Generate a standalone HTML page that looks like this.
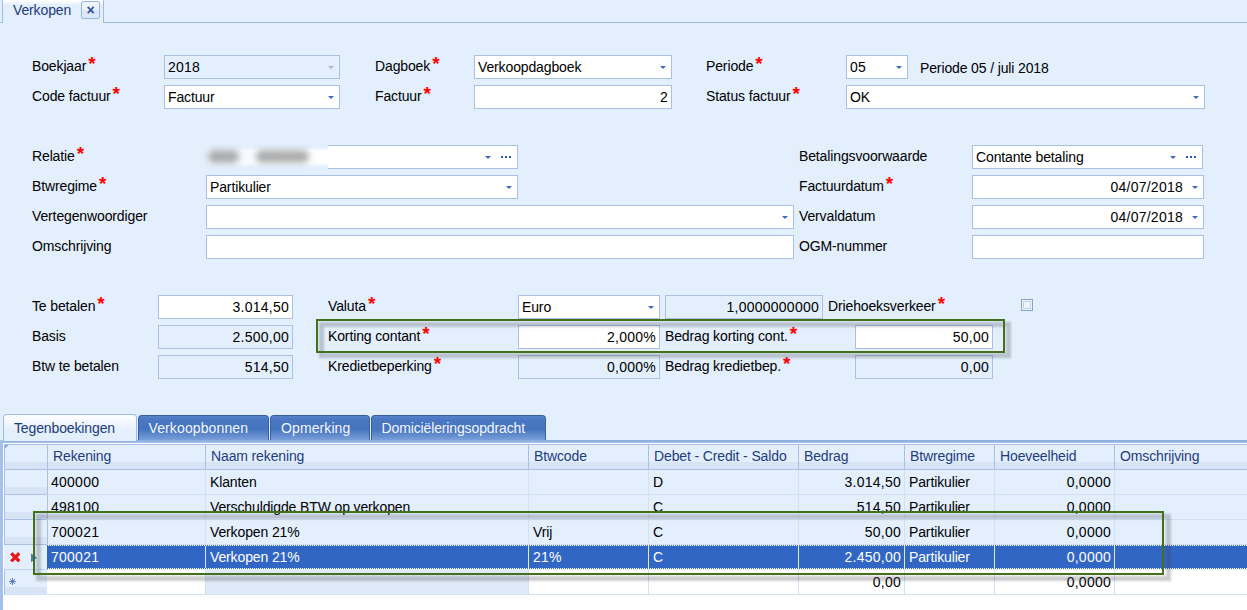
<!DOCTYPE html>
<html lang="nl"><head><meta charset="utf-8"><title>Verkopen</title>
<style>
*{box-sizing:border-box;margin:0;padding:0}
html,body{width:1247px;height:610px;overflow:hidden;background:#e3effd}
body{position:relative;font-family:"Liberation Sans",sans-serif;font-size:14px;color:#000000;letter-spacing:-0.13px}
.l{position:absolute;height:24px;line-height:24px;white-space:nowrap}
.l i{font-style:normal;color:#f00;font-size:19px;line-height:0;font-weight:bold;position:relative;top:-1.2px;margin-left:2px;letter-spacing:0}
.f{position:absolute;height:24px;line-height:22px;border:1px solid #a9c0e4;background:#fff;padding:0 3px;white-space:nowrap;overflow:hidden}
.f.d{background:#e3effd}
.f.r{text-align:right;padding-right:3px}
.a{position:absolute;width:0;height:0;border-left:3px solid transparent;border-right:3px solid transparent;border-top:3.5px solid #3d6cb8}
.a.g{border-top-color:#a9b7cc}
.e{position:absolute;width:10px;height:2px;background:linear-gradient(90deg,#2d5aa8 0 2px,transparent 2px 4px,#2d5aa8 4px 6px,transparent 6px 8px,#2d5aa8 8px 10px)}


.tab{position:absolute;top:415px;height:26px;line-height:25px;white-space:nowrap;border-radius:4px 4px 0 0;color:#f3f7fd;padding-left:10px;
 border:1px solid #3560a8;border-bottom:none;
 background:linear-gradient(180deg,#5682c9 0,#4a78c2 15%,#4573be 52%,#5a85ca 70%,#7fa3db 100%)}
.tab.act{top:414px;height:27px;line-height:27px;z-index:2;color:#1c3c7a;border:1px solid #9dbce6;border-bottom:none;background:linear-gradient(180deg,#ffffff 0,#f4f8fe 25%,#e3effd 60%)}
.hc{position:absolute;top:445px;height:24px;line-height:22px;color:#1e3c7c;white-space:nowrap;padding-left:5px;border-left:1px solid #a9c0e4;
 background:linear-gradient(180deg,#e3effd 0,#e3effd 70%,#d6e4f6 70%,#d6e4f6 100%)}
.c{position:absolute;height:25px;line-height:24px;white-space:nowrap;padding:0 3px 0 4px;border-left:1px solid #d2e0f3;border-bottom:1px solid #d2e0f3;overflow:hidden}
.c.r{text-align:right}
.ind{position:absolute;left:5px;width:42px;height:25px;border-bottom:1px solid #a9c0e4;background:linear-gradient(180deg,#e3effd 0,#e3effd 70%,#d6e4f6 70%,#d6e4f6 100%)}
.gb{position:absolute;border:2px solid #44701c}
.gs{position:absolute;border:5.5px solid rgba(70,72,80,.27);filter:blur(1.3px)}
.n{letter-spacing:.25px}

</style></head><body>
<div style="position:absolute;left:0;top:22px;width:1247px;height:1px;background:#9dbce6"></div>
<div style="position:absolute;left:2px;top:-2px;width:102px;height:25px;border:1px solid #9dbce6;border-bottom:none;background:linear-gradient(180deg,#fff 0,#fff 2px,#e3effd 6px)"></div>
<div style="position:absolute;left:13px;top:0;height:22px;line-height:20px;color:#1c3c7a;white-space:nowrap">Verkopen</div>
<div style="position:absolute;left:81px;top:1px;width:19px;height:18px;border:1px solid #9ab4dc;border-radius:2px;background:linear-gradient(180deg,#eff5fd 0,#e9f1fb 50%,#dbe7f6 50%,#dde8f7 100%);color:#2b4f94;font-size:14px;font-weight:bold;line-height:16px;text-align:center;letter-spacing:0">×</div>
<div class="l" style="left:32px;top:54px">Boekjaar<i>*</i></div>
<div class="f d n" style="left:164px;top:55px;width:176px;">2018</div>
<div class="a g" style="left:327.5px;top:65.5px"></div>
<div class="l" style="left:32px;top:84px">Code factuur<i>*</i></div>
<div class="f " style="left:164px;top:85px;width:176px;">Factuur</div>
<div class="a" style="left:327.5px;top:95.5px"></div>
<div class="l" style="left:375px;top:54px">Dagboek<i>*</i></div>
<div class="f " style="left:474px;top:55px;width:198px;">Verkoopdagboek</div>
<div class="a" style="left:659.5px;top:65.5px"></div>
<div class="l" style="left:375px;top:84px">Factuur<i>*</i></div>
<div class="f r n" style="left:474px;top:85px;width:198px;">2</div>
<div class="l" style="left:706px;top:54px">Periode<i>*</i></div>
<div class="f  n" style="left:846px;top:55px;width:62px;">05</div>
<div class="a" style="left:895.5px;top:65.5px"></div>
<div class="l" style="left:920px;top:56px">Periode 05 / juli 2018</div>
<div class="l" style="left:706px;top:84px">Status factuur<i>*</i></div>
<div class="f " style="left:846px;top:85px;width:359px;">OK</div>
<div class="a" style="left:1192.5px;top:95.5px"></div>
<div class="l" style="left:32px;top:144px">Relatie<i>*</i></div>
<div class="f " style="left:206px;top:145px;width:312px;"></div>
<div class="a" style="left:484.5px;top:155.5px"></div>
<div class="e" style="left:501px;top:156px"></div>
<div class="l" style="left:32px;top:174px">Btwregime<i>*</i></div>
<div class="f " style="left:206px;top:175px;width:312px;">Partikulier</div>
<div class="a" style="left:505.5px;top:185.5px"></div>
<div class="l" style="left:32px;top:204px">Vertegenwoordiger</div>
<div class="f " style="left:206px;top:205px;width:588px;"></div>
<div class="a" style="left:781.5px;top:215.5px"></div>
<div class="l" style="left:32px;top:234px">Omschrijving</div>
<div class="f " style="left:206px;top:235px;width:588px;"></div>
<div class="l" style="left:799px;top:144px">Betalingsvoorwaarde</div>
<div class="f " style="left:972px;top:145px;width:231px;">Contante betaling</div>
<div class="a" style="left:1169.5px;top:155.5px"></div>
<div class="e" style="left:1186px;top:156px"></div>
<div class="l" style="left:799px;top:174px">Factuurdatum<i>*</i></div>
<div class="f r n" style="left:972px;top:175px;width:232px;padding-right:20px">04/07/2018</div>
<div class="a" style="left:1191.5px;top:185.5px"></div>
<div class="l" style="left:799px;top:204px">Vervaldatum</div>
<div class="f r n" style="left:972px;top:205px;width:232px;padding-right:20px">04/07/2018</div>
<div class="a" style="left:1191.5px;top:215.5px"></div>
<div class="l" style="left:799px;top:234px">OGM-nummer</div>
<div class="f " style="left:972px;top:235px;width:232px;"></div>
<div style="position:absolute;left:201px;top:144px;width:127px;height:26px;background:#e3effd"></div>
<div style="position:absolute;left:207px;top:149px;width:123px;height:16px;background:linear-gradient(90deg,#f0f5fd 0,#f8fbff 40%,#ffffff 100%);filter:blur(1.6px)"></div>
<div style="position:absolute;left:328px;top:146px;width:5px;height:22px;background:#fff"></div>
<div style="position:absolute;left:208px;top:150px;width:31px;height:13px;border-radius:6px;background:#909090;filter:blur(3px);opacity:.72"></div>
<div style="position:absolute;left:256px;top:150px;width:53px;height:13px;border-radius:6px;background:#909090;filter:blur(3px);opacity:.72"></div>
<div class="l" style="left:32px;top:294px">Te betalen<i>*</i></div>
<div class="f r n" style="left:158px;top:295px;width:135px;">3.014,50</div>
<div class="l" style="left:32px;top:324px">Basis</div>
<div class="f r d n" style="left:158px;top:325px;width:135px;">2.500,00</div>
<div class="l" style="left:32px;top:354px">Btw te betalen</div>
<div class="f r d n" style="left:158px;top:355px;width:135px;">514,50</div>
<div class="l" style="left:328px;top:294px">Valuta<i>*</i></div>
<div class="f " style="left:518px;top:295px;width:142px;">Euro</div>
<div class="a" style="left:647.5px;top:305.5px"></div>
<div class="f r d n" style="left:665px;top:295px;width:158px;">1,0000000000</div>
<div class="l" style="left:828px;top:294px">Driehoeksverkeer<i>*</i></div>
<div style="position:absolute;left:1021px;top:299px;width:12px;height:12px;border:1px solid #8aa4cc;background:#eef4fc;box-shadow:inset 0 0 0 1px #eef4fc, inset 0 0 0 2px #c3d3ea"></div>
<div class="l" style="left:328px;top:324px">Korting contant<i>*</i></div>
<div class="f r n" style="left:518px;top:325px;width:142px;">2,000%</div>
<div class="l" style="left:665px;top:324px">Bedrag korting cont.<i>*</i></div>
<div class="f r n" style="left:855px;top:325px;width:138px;">50,00</div>
<div class="l" style="left:328px;top:354px">Kredietbeperking<i>*</i></div>
<div class="f r d n" style="left:518px;top:355px;width:142px;">0,000%</div>
<div class="l" style="left:665px;top:354px">Bedrag kredietbep.<i>*</i></div>
<div class="f r d n" style="left:855px;top:355px;width:138px;">0,00</div>
<div class="tab act" style="left:3px;width:134px;padding-left:10px">Tegenboekingen</div>
<div class="tab" style="left:138px;width:131px;padding-left:9.5px;letter-spacing:.12px">Verkoopbonnen</div>
<div class="tab" style="left:270px;width:100px;letter-spacing:.1px">Opmerking</div>
<div class="tab" style="left:371px;width:175px;padding-left:9.5px">Domiciëleringsopdracht</div>
<div style="position:absolute;left:0;top:440px;width:1247px;height:3px;background:linear-gradient(180deg,#86a9dd,#a6c3ec)"></div>
<div style="position:absolute;left:0;top:440px;width:3px;height:170px;background:#a3c1eb"></div>
<div style="position:absolute;left:3px;top:443px;width:1244px;height:167px;background:#fff"></div>
<div style="position:absolute;left:4px;top:444px;width:1243px;height:151px;border:1px solid #a9c0e4;border-right:none;background:#e3effd"></div>
<div class="hc" style="left:5px;width:42px;border-left:none"></div>
<div class="hc" style="left:47px;width:158px">Rekening</div>
<div class="hc" style="left:205px;width:323px">Naam rekening</div>
<div class="hc" style="left:528px;width:120px">Btwcode</div>
<div class="hc" style="left:648px;width:150px">Debet - Credit - Saldo</div>
<div class="hc" style="left:798px;width:106px">Bedrag</div>
<div class="hc" style="left:904px;width:90px">Btwregime</div>
<div class="hc" style="left:994px;width:120px">Hoeveelheid</div>
<div class="hc" style="left:1114px;width:133px">Omschrijving</div>
<div style="position:absolute;left:5px;top:469px;width:1242px;height:1px;background:#a9c0e4"></div>
<svg style="position:absolute;left:5px;top:445px" width="4" height="4" viewBox="0 0 4 4"><path d="M0 0H3.6L0 3.6Z" fill="#86a7dc"/></svg>
<div class="ind" style="top:470px"></div>
<div style="position:absolute;left:47px;top:470px;width:1px;height:25px;background:#a9c0e4"></div>
<div class="c n" style="left:47px;top:470px;width:158px;border-left:none;padding-left:4px;">400000</div>
<div class="c" style="left:205px;top:470px;width:323px;">Klanten</div>
<div class="c" style="left:528px;top:470px;width:120px;"></div>
<div class="c" style="left:648px;top:470px;width:150px;">D</div>
<div class="c r n" style="left:798px;top:470px;width:106px;">3.014,50</div>
<div class="c" style="left:904px;top:470px;width:90px;">Partikulier</div>
<div class="c r n" style="left:994px;top:470px;width:120px;">0,0000</div>
<div class="c" style="left:1114px;top:470px;width:133px;"></div>
<div class="ind" style="top:495px"></div>
<div style="position:absolute;left:47px;top:495px;width:1px;height:25px;background:#a9c0e4"></div>
<div class="c n" style="left:47px;top:495px;width:158px;border-left:none;padding-left:4px;">498100</div>
<div class="c" style="left:205px;top:495px;width:323px;">Verschuldigde BTW op verkopen</div>
<div class="c" style="left:528px;top:495px;width:120px;"></div>
<div class="c" style="left:648px;top:495px;width:150px;">C</div>
<div class="c r n" style="left:798px;top:495px;width:106px;">514,50</div>
<div class="c" style="left:904px;top:495px;width:90px;">Partikulier</div>
<div class="c r n" style="left:994px;top:495px;width:120px;">0,0000</div>
<div class="c" style="left:1114px;top:495px;width:133px;"></div>
<div class="ind" style="top:520px"></div>
<div style="position:absolute;left:47px;top:520px;width:1px;height:25px;background:#a9c0e4"></div>
<div class="c n" style="left:47px;top:520px;width:158px;border-left:none;padding-left:4px;">700021</div>
<div class="c" style="left:205px;top:520px;width:323px;">Verkopen 21%</div>
<div class="c" style="left:528px;top:520px;width:120px;">Vrij</div>
<div class="c" style="left:648px;top:520px;width:150px;">C</div>
<div class="c r n" style="left:798px;top:520px;width:106px;">50,00</div>
<div class="c" style="left:904px;top:520px;width:90px;">Partikulier</div>
<div class="c r n" style="left:994px;top:520px;width:120px;">0,0000</div>
<div class="c" style="left:1114px;top:520px;width:133px;"></div>
<div style="position:absolute;left:4px;top:545px;width:43px;height:25px;background:#e3effd;border-bottom:1px solid #c3d5ee"></div>
<div style="position:absolute;left:47px;top:545px;width:1px;height:25px;background:#a9c0e4"></div>
<div class="c n" style="left:47px;top:545px;width:158px;height:24px;line-height:22px;padding-top:1px;background:#3166c4;color:#fff;border-left-color:#dfe8f6;border-bottom:none;border-left:none;padding-left:4px;">700021</div>
<div class="c" style="left:205px;top:545px;width:323px;height:24px;line-height:22px;padding-top:1px;background:#3166c4;color:#fff;border-left-color:#dfe8f6;border-bottom:none;">Verkopen 21%</div>
<div class="c n" style="left:528px;top:545px;width:120px;height:24px;line-height:22px;padding-top:1px;background:#3166c4;color:#fff;border-left-color:#dfe8f6;border-bottom:none;">21%</div>
<div class="c" style="left:648px;top:545px;width:150px;height:24px;line-height:22px;padding-top:1px;background:#3166c4;color:#fff;border-left-color:#dfe8f6;border-bottom:none;">C</div>
<div class="c r n" style="left:798px;top:545px;width:106px;height:24px;line-height:22px;padding-top:1px;background:#3166c4;color:#fff;border-left-color:#dfe8f6;border-bottom:none;">2.450,00</div>
<div class="c" style="left:904px;top:545px;width:90px;height:24px;line-height:22px;padding-top:1px;background:#3166c4;color:#fff;border-left-color:#dfe8f6;border-bottom:none;">Partikulier</div>
<div class="c r n" style="left:994px;top:545px;width:120px;height:24px;line-height:22px;padding-top:1px;background:#3166c4;color:#fff;border-left-color:#dfe8f6;border-bottom:none;">0,0000</div>
<div class="c" style="left:1114px;top:545px;width:133px;height:24px;line-height:22px;padding-top:1px;background:#3166c4;color:#fff;border-left-color:#dfe8f6;border-bottom:none;"></div>
<div class="ind" style="top:570px"></div>
<div style="position:absolute;left:47px;top:570px;width:1px;height:25px;background:#a9c0e4"></div>
<div class="c" style="left:47px;top:570px;width:158px;background:#fff;border-left:none;padding-left:4px;"></div>
<div class="c" style="left:205px;top:570px;width:323px;background:#dfe9f7;"></div>
<div class="c" style="left:528px;top:570px;width:120px;background:#fff;"></div>
<div class="c" style="left:648px;top:570px;width:150px;background:#fff;"></div>
<div class="c r n" style="left:798px;top:570px;width:106px;background:#fff;">0,00</div>
<div class="c" style="left:904px;top:570px;width:90px;background:#fff;"></div>
<div class="c r n" style="left:994px;top:570px;width:120px;background:#fff;">0,0000</div>
<div class="c" style="left:1114px;top:570px;width:133px;background:#fff;"></div>
<div style="position:absolute;left:48px;top:545px;width:1199px;height:1px;background:repeating-linear-gradient(90deg,#fff 0 1px,#3166c4 1px 2px)"></div>
<div style="position:absolute;left:48px;top:568px;width:1199px;height:1px;background:repeating-linear-gradient(90deg,#fff 0 1px,#3166c4 1px 2px)"></div>
<div style="position:absolute;left:5px;top:594px;width:1242px;height:1px;background:#d2e0f3"></div>
<svg style="position:absolute;left:9.5px;top:551.5px" width="10.6" height="10.6" viewBox="-.5 -.5 11 11"><path d="M2 0L5 3L8 0L10 2L7 5L10 8L8 10L5 7L2 10L0 8L3 5L0 2Z" fill="#f01414" stroke="#d40808" stroke-width=".7" stroke-linejoin="round"/></svg>
<svg style="position:absolute;left:31px;top:552.5px" width="7" height="10" viewBox="0 0 7 10"><path d="M0 0.3L6 4.8L0 9.3Z" fill="#4a78c2"/></svg>
<svg style="position:absolute;left:9px;top:578px" width="7" height="7" viewBox="0 0 7 7"><g stroke="#4068b4" stroke-width=".8" fill="none"><path d="M3.5 0V7M0 3.5H7M1 1L6 6M6 1L1 6"/></g></svg>
<div class="gs" style="left:319px;top:322px;width:692px;height:36px"></div>
<div class="gb" style="left:316px;top:319px;width:689px;height:34px"></div>
<div class="gs" style="left:36px;top:514px;width:1135px;height:67px"></div>
<div class="gb" style="left:33px;top:511px;width:1131px;height:64px"></div>
</body></html>
